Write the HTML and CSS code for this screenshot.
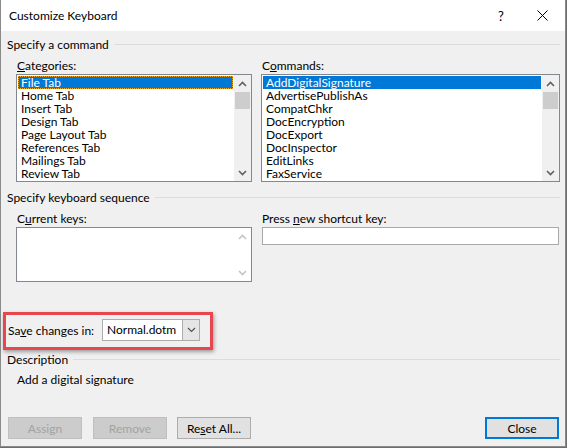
FILE: index.html
```html
<!DOCTYPE html>
<html>
<head>
<meta charset="utf-8">
<title>Customize Keyboard</title>
<link rel="stylesheet" href="styles.css">
</head>
<body>
<div class="dialog">
  <div class="titlebar">
    <span class="title">Customize Keyboard</span>
    <span class="help">?</span>
    <span class="closex"><svg width="11" height="11" viewBox="0 0 11 11"><path d="M0.5 0.5 L10.5 10.5 M10.5 0.5 L0.5 10.5" stroke="#000" stroke-width="1" fill="none"/></svg></span>
  </div>
  <div class="content">
    <div class="ghead"><span>Specify a command</span><i class="rule"></i></div>
    <div class="cols">
      <div class="col lcol">
        <div class="label"><u>C</u>ategories:</div>
        <div class="listbox">
          <ul class="items">
            <li class="sel focus">File Tab</li>
            <li>Home Tab</li>
            <li>Insert Tab</li>
            <li>Design Tab</li>
            <li>Page Layout Tab</li>
            <li>References Tab</li>
            <li>Mailings Tab</li>
            <li>Review Tab</li>
          </ul>
          <div class="vscroll">
            <span class="arr"><svg width="9" height="6" viewBox="0 0 9 6"><path d="M1 5 L4.5 1.5 L8 5" stroke="#606060" stroke-width="1.6" fill="none"/></svg></span>
            <span class="thumb"></span>
            <span class="track"></span>
            <span class="arr"><svg width="9" height="6" viewBox="0 0 9 6"><path d="M1 1 L4.5 4.5 L8 1" stroke="#606060" stroke-width="1.6" fill="none"/></svg></span>
          </div>
        </div>
      </div>
      <div class="col rcol">
        <div class="label">C<u>o</u>mmands:</div>
        <div class="listbox">
          <ul class="items">
            <li class="sel">AddDigitalSignature</li>
            <li>AdvertisePublishAs</li>
            <li>CompatChkr</li>
            <li>DocEncryption</li>
            <li>DocExport</li>
            <li>DocInspector</li>
            <li>EditLinks</li>
            <li>FaxService</li>
          </ul>
          <div class="vscroll">
            <span class="arr"><svg width="9" height="6" viewBox="0 0 9 6"><path d="M1 5 L4.5 1.5 L8 5" stroke="#606060" stroke-width="1.6" fill="none"/></svg></span>
            <span class="thumb"></span>
            <span class="track"></span>
            <span class="arr"><svg width="9" height="6" viewBox="0 0 9 6"><path d="M1 1 L4.5 4.5 L8 1" stroke="#606060" stroke-width="1.6" fill="none"/></svg></span>
          </div>
        </div>
      </div>
    </div>

    <div class="ghead g2"><span>Specify keyboard sequence</span><i class="rule"></i></div>
    <div class="cols">
      <div class="col lcol">
        <div class="label">C<u>u</u>rrent keys:</div>
        <div class="keysbox">
          <div class="keyslist"></div>
          <div class="vscroll dis">
            <span class="arr"><svg width="9" height="6" viewBox="0 0 9 6"><path d="M1 5 L4.5 1.5 L8 5" stroke="#c4c4c4" stroke-width="1.6" fill="none"/></svg></span>
            <span class="track"></span>
            <span class="arr"><svg width="9" height="6" viewBox="0 0 9 6"><path d="M1 1 L4.5 4.5 L8 1" stroke="#c4c4c4" stroke-width="1.6" fill="none"/></svg></span>
          </div>
        </div>
      </div>
      <div class="col rcol">
        <div class="label">Press <u>n</u>ew shortcut key:</div>
        <div class="textbox"></div>
      </div>
    </div>

    <div class="saverow">
      <span class="savelabel">Sa<u>v</u>e changes in:</span>
      <div class="combo">
        <span class="comboval">Normal.dotm</span>
        <span class="dropbtn"><svg width="9" height="6" viewBox="0 0 9 6"><path d="M1 1 L4.5 4.5 L8 1" stroke="#505050" stroke-width="1.2" fill="none"/></svg></span>
      </div>
    </div>

    <div class="ghead g3"><span>Description</span><i class="rule"></i></div>
    <div class="desc">Add a digital signature</div>

    <div class="buttons">
      <button class="btn disabled">Assign</button>
      <button class="btn disabled b2">Remove</button>
      <button class="btn b3">Re<u>s</u>et All...</button>
      <button class="btn primary">Close</button>
    </div>
  </div>
</div>
</body>
</html>
```

FILE: styles.css
```css
* { box-sizing: border-box; }
html, body { margin: 0; padding: 0; }
body {
  width: 567px;
  height: 448px;
  background: #6d6d6d;
  font-family: "Lato", "Noto Sans", sans-serif;
  font-size: 12px;
  color: #000;
  overflow: hidden;
}
.dialog {
  width: 566px;
  height: 447px;
  background: #f0f0f0;
  border: 1px solid #8a8a8a;
  border-top: none;
  display: flex;
  flex-direction: column;
}
.titlebar {
  height: 31px;
  background: #fff;
  display: flex;
  align-items: center;
  padding-left: 8px;
}
.title { flex: 1; font-size: 12px; padding-bottom: 1px; }
.help { font-size: 13px; width: 10px; margin-right: 29px; }
.closex { width: 11px; height: 11px; margin-right: 17px; display: flex; }
.content {
  flex: 1;
  display: flex;
  flex-direction: column;
  padding: 0 5px 0 6px;
}
.ghead {
  display: flex;
  align-items: center;
  height: 15px;
  margin-top: 6px;
  line-height: 15px;
}
.ghead .rule {
  flex: 1;
  height: 0;
  border-top: 1px solid #dcdcdc;
  margin-left: 5px;
}
.g2 { margin-top: 8px; }
.g3 { margin-top: 2px; }
.cols {
  display: flex;
  padding-left: 9px;
  gap: 9px;
}
.lcol { width: 236px; }
.rcol { flex: 1; }
.col { display: flex; flex-direction: column; }
.label {
  height: 15px;
  line-height: 15px;
  margin-top: 6px;
  margin-bottom: 1px;
  padding-left: 1px;
}
.label u, .savelabel u, .btn u { text-decoration: underline; text-underline-offset: 1px; }
.listbox {
  height: 108px;
  border: 1px solid #828790;
  background: #fff;
  display: flex;
}
.items {
  list-style: none;
  margin: 0;
  padding: 1px 1px 0 1px;
  flex: 1;
}
.items li {
  height: 13px;
  line-height: 13px;
  padding-left: 3px;
  white-space: nowrap;
}
.items li.sel { background: #0078d7; color: #fff; }
.items li.focus { outline: 1px dotted #f5a623; outline-offset: -1px; }
.vscroll {
  width: 17px;
  background: #f0f0f0;
  display: flex;
  flex-direction: column;
}
.vscroll .arr {
  height: 17px;
  display: flex;
  align-items: center;
  justify-content: center;
}
.vscroll .thumb {
  height: 17px;
  margin: 0 1px;
  background: #cdcdcd;
}
.vscroll .track { flex: 1; }
.vscroll.dis { background: #fff; }
.keysbox {
  height: 55px;
  border: 1px solid #828790;
  background: #fff;
  display: flex;
}
.keyslist { flex: 1; }
.textbox {
  height: 18px;
  border: 1px solid #a9a9a9;
  background: #fff;
  margin-left: 1px;
  margin-right: 1px;
}
.saverow {
  align-self: flex-start;
  display: flex;
  align-items: center;
  margin-top: 30px;
  margin-left: -4px;
  height: 38px;
  border: 3px solid #e8464e;
  padding: 0 10px 2px 2px;
  box-shadow: 1px 2px 4px rgba(0, 0, 0, 0.35);
}
.savelabel { width: 94px; }
.combo {
  width: 98px;
  height: 22px;
  border: 1px solid #acacac;
  background: #fff;
  display: flex;
  align-items: stretch;
}
.comboval { flex: 1; padding-left: 4px; line-height: 20px; }
.dropbtn {
  width: 17px;
  background: #e5e5e5;
  border-left: 1px solid #acacac;
  display: flex;
  align-items: center;
  justify-content: center;
}
.desc {
  height: 15px;
  line-height: 15px;
  margin-top: 5px;
  padding-left: 10px;
}
.buttons {
  display: flex;
  margin-top: 30px;
  padding-left: 1px;
}
.btn {
  width: 74px;
  height: 22px;
  font-family: inherit;
  font-size: 12px;
  background: #e1e1e1;
  border: 1px solid #adadad;
  color: #000;
  padding: 0;
  margin: 0;
}
.btn.disabled {
  background: #cccccc;
  border-color: #bfbfbf;
  color: #a3a3a3;
}
.b2 { margin-left: 11px; }
.b3 { margin-left: 10px; }
.btn.primary {
  margin-left: auto;
  margin-right: 1px;
  border: 2px solid #0078d7;
}
```
